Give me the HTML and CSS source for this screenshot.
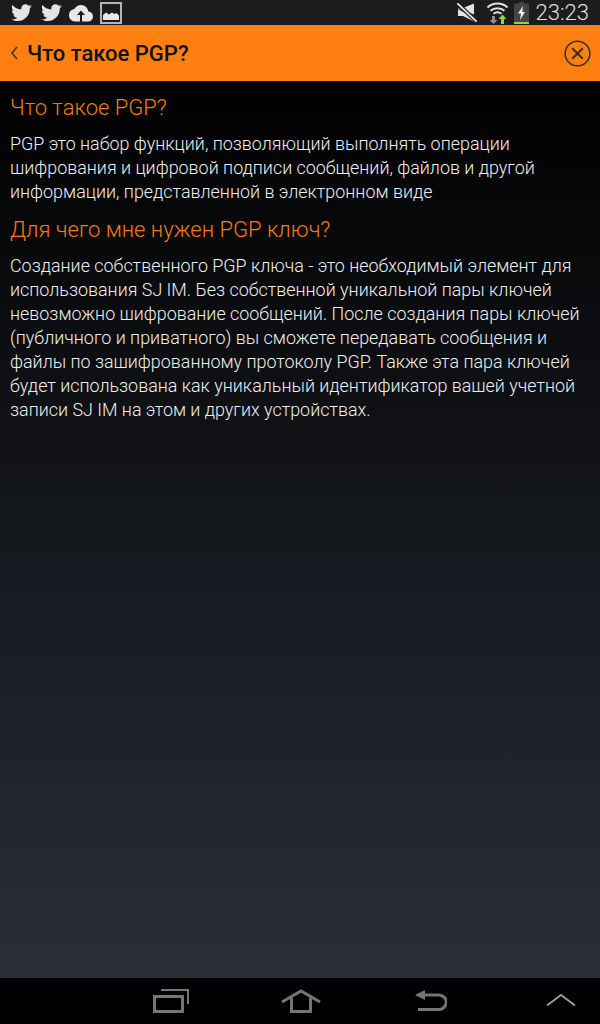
FILE: index.html
```html
<!DOCTYPE html>
<html lang="ru">
<head>
    <meta charset="UTF-8">
    <meta name="viewport" content="width=device-width, initial-scale=1.0">
    <title>Что такое PGP?</title>
    <link rel="stylesheet" href="styles.css">
</head>
<body>
    <div class="status-bar">
        <div class="status-left">
            <svg class="st-tw" viewBox="0 0 24 20"><path fill="#e4e4e4" d="M24 2.400c-.9.4-1.800.7-2.800.8 1-.6 1.800-1.600 2.200-2.700-1 .6-2 1-3.100 1.200C19.300.7 18 0 16.600 0c-2.700 0-4.900 2.200-4.900 4.900 0 .4 0 .8.100 1.100C7.700 5.800 4.100 3.900 1.700.9c-.4.700-.7 1.600-.7 2.500 0 1.700.9 3.200 2.200 4.100-.8 0-1.600-.2-2.200-.6v.1c0 2.400 1.700 4.400 3.900 4.800-.4.100-.8.200-1.300.2-.3 0-.6 0-.9-.1.600 2 2.400 3.400 4.600 3.400-1.700 1.300-3.800 2.100-6.100 2.100-.4 0-.8 0-1.200-.1C2.200 18.300 4.800 19.100 7.500 19.100c9.100 0 14-7.500 14-14v-.6c1-.7 1.800-1.500 2.500-2.100z"/></svg>
            <svg class="st-tw" viewBox="0 0 24 20"><path fill="#e4e4e4" d="M24 2.400c-.9.4-1.800.7-2.800.8 1-.6 1.800-1.600 2.200-2.700-1 .6-2 1-3.100 1.200C19.300.7 18 0 16.600 0c-2.700 0-4.900 2.200-4.900 4.900 0 .4 0 .8.100 1.100C7.700 5.800 4.100 3.900 1.700.9c-.4.700-.7 1.600-.7 2.500 0 1.700.9 3.200 2.200 4.100-.8 0-1.600-.2-2.200-.6v.1c0 2.400 1.700 4.400 3.900 4.800-.4.100-.8.200-1.300.2-.3 0-.6 0-.9-.1.600 2 2.400 3.400 4.600 3.400-1.700 1.300-3.800 2.100-6.100 2.100-.4 0-.8 0-1.200-.1C2.200 18.300 4.800 19.100 7.500 19.100c9.100 0 14-7.500 14-14v-.6c1-.7 1.800-1.500 2.500-2.100z"/></svg>
            <svg class="st-cloud" viewBox="0 0 24 17"><path fill="#e8e8e8" d="M19.400 6.600C18.700 2.800 15.600 0 12 0 9.100 0 6.600 1.700 5.300 4.100 2.300 4.500 0 7.100 0 10.300 0 13.600 2.700 16.500 6 16.500h5V10H8l4-4.500 4 4.500h-3v6.500h6c2.800 0 5-2.300 5-5.100 0-2.600-2-4.600-4.600-4.800z"/></svg>
            <svg class="st-pic" viewBox="0 0 22 22"><rect x="1" y="1" width="20" height="20" fill="#1c1c1c" stroke="#b4b4b4" stroke-width="2"/><path fill="#e8e8e8" d="M3 18v-5l3-2.500 3 2 3-2 2.500 1.500 2-1 2.500 2.500v4.500z"/></svg>
        </div>
        <div class="status-right">
            <svg class="st-mute" viewBox="0 0 20 19"><path fill="#e2e2e2" d="M1 5h5l11-4.500v11zM1 6v7h5l11 5.500V15z"/><path stroke="#1c1c1c" stroke-width="4" fill="none" d="M0 0l20 19"/><path stroke="#e2e2e2" stroke-width="1.800" fill="none" d="M0 0l20 19"/></svg>
            <svg class="st-wifi" viewBox="0 0 21 22"><g fill="none" stroke="#e2e2e2" stroke-width="2"><path d="M0.500 5.500C6 .3 15 .3 20.500 5.500"/><path d="M3.500 8.800c3.900-3.500 10.100-3.500 14 0"/><path d="M6.500 11.800c2.300-1.800 5.700-1.800 8 0"/></g><path fill="#8c8c8c" d="M5 14h3v4h2.500l-4 4-4-4H5z"/><path fill="#8fd43a" d="M14 22v-5h-2.500l4-4.500 4 4.500H17v5z"/></svg>
            <svg class="st-batt" viewBox="0 0 15 22"><path fill="#444" d="M5 0h5v1.500h5V22H0V1.500h5z"/><rect y="20" width="15" height="2" fill="#8fd43a"/><path fill="#f0f0f0" d="M9 4L4 11.500h3L6 18l5-8H8.300z"/></svg>
            <span class="clock">23:23</span>
        </div>
    </div>

    <div class="header">
        <svg class="back" viewBox="0 0 8 14"><path d="M7 1L2 7l5 6" fill="none" stroke="#3a3a3a" stroke-width="1.600"/></svg>
        <span class="header-title">Что такое PGP?</span>
        <svg class="close" viewBox="0 0 28 28"><circle cx="14" cy="14" r="12.800" fill="none" stroke="#303030" stroke-width="1.600"/><path d="M8.500 8.500l11 11M19.500 8.500l-11 11" stroke="#303030" stroke-width="2"/></svg>
    </div>

    <div class="content">
        <h2>Что такое PGP?</h2>
        <p>PGP это набор функций, позволяющий выполнять операции шифрования и цифровой подписи сообщений, файлов и другой информации, представленной в электронном виде</p>
        <h2>Для чего мне нужен PGP ключ?</h2>
        <p>Создание собственного PGP ключа - это необходимый элемент для использования SJ IM. Без собственной уникальной пары ключей невозможно шифрование сообщений. После создания пары ключей (публичного и приватного) вы сможете передавать сообщения и файлы по зашифрованному протоколу PGP. Также эта пара ключей будет использована как уникальный идентификатор вашей учетной записи SJ IM на этом и других устройствах.</p>
    </div>

    <div class="nav-bar">
        <svg class="nav-recent" viewBox="0 0 36 24"><path d="M1.500 7.500h28v15h-28z" fill="none" stroke="#757575" stroke-width="3"/><path d="M8 1h27v14" fill="none" stroke="#757575" stroke-width="2"/></svg>
        <svg class="nav-home" viewBox="0 0 40 24"><path d="M1 13L20 2l19 11" fill="none" stroke="#757575" stroke-width="3"/><path d="M10.500 9v13.500h19V9" fill="none" stroke="#757575" stroke-width="3"/></svg>
        <svg class="nav-return" viewBox="0 0 32 21"><path d="M0 5L10 0v10z" fill="#757575"/><path d="M9 5h15a7 7 0 0 1 0 14.500H3" fill="none" stroke="#757575" stroke-width="3"/></svg>
        <svg class="nav-up" viewBox="0 0 30 14"><path d="M1 12.500L15 2l14 10.500" fill="none" stroke="#9a9a9a" stroke-width="2"/></svg>
    </div>
</body>
</html>
```

FILE: styles.css
```css
* {
    box-sizing: border-box;
}
html, body {
    height: 100%;
}
body {
    margin: 0;
    display: flex;
    flex-direction: column;
    height: 1024px;
    overflow: hidden;
    font-family: Roboto, "Noto Sans", sans-serif;
    background-color: #000;
}
svg {
    display: block;
    flex: none;
}
.status-bar {
    height: 25px;
    flex: none;
    background-color: #1c1c1c;
    display: flex;
    justify-content: space-between;
    align-items: center;
    padding: 0 11px;
}
.status-left, .status-right {
    display: flex;
    align-items: center;
}
.st-tw {
    width: 21px;
    height: 18px;
    margin-right: 9px;
}
.st-cloud {
    width: 24px;
    height: 17px;
    margin: 2px 7px 0 -2px;
}
.st-pic {
    width: 22px;
    height: 22px;
}
.st-mute {
    width: 20px;
    height: 19px;
    margin-right: 10px;
}
.st-wifi {
    width: 21px;
    height: 22px;
    margin-right: 6px;
}
.st-batt {
    width: 15px;
    height: 22px;
    margin-right: 7px;
}
.clock {
    color: #e0e0e0;
    font-size: 22px;
    font-weight: 300;
    line-height: 25px;
}
.header {
    height: 56px;
    flex: none;
    background-color: #ff7f11;
    display: flex;
    align-items: center;
    padding: 0 9px 0 10px;
}
.back {
    width: 8px;
    height: 14px;
    margin-right: 10px;
}
.header-title {
    flex: 1;
    margin-left: -1px;
    color: #111;
    font-size: 22px;
    font-weight: 500;
}
.close {
    width: 27px;
    height: 27px;
}
.content {
    flex: 1;
    padding: 14px 10px 0;
    background: linear-gradient(#000, #292e38);
}
h2 {
    margin: 0 0 11px;
    color: #f47a10;
    font-size: 22px;
    font-weight: 300;
    line-height: 26px;
}
p {
    margin: 0 0 13px;
    color: #eee;
    font-size: 17.9px;
    font-weight: 300;
    line-height: 24px;
}
.nav-bar {
    height: 47px;
    flex: none;
    background-color: #000;
    border-top: 1px solid #123540;
    position: relative;
}
.nav-bar svg {
    position: absolute;
}
.nav-recent {
    left: 153px;
    top: 11px;
    width: 36px;
    height: 24px;
}
.nav-home {
    left: 281px;
    top: 11px;
    width: 40px;
    height: 24px;
}
.nav-return {
    left: 415px;
    top: 12px;
    width: 32px;
    height: 21px;
}
.nav-up {
    left: 546px;
    top: 15px;
    width: 30px;
    height: 14px;
}
```
